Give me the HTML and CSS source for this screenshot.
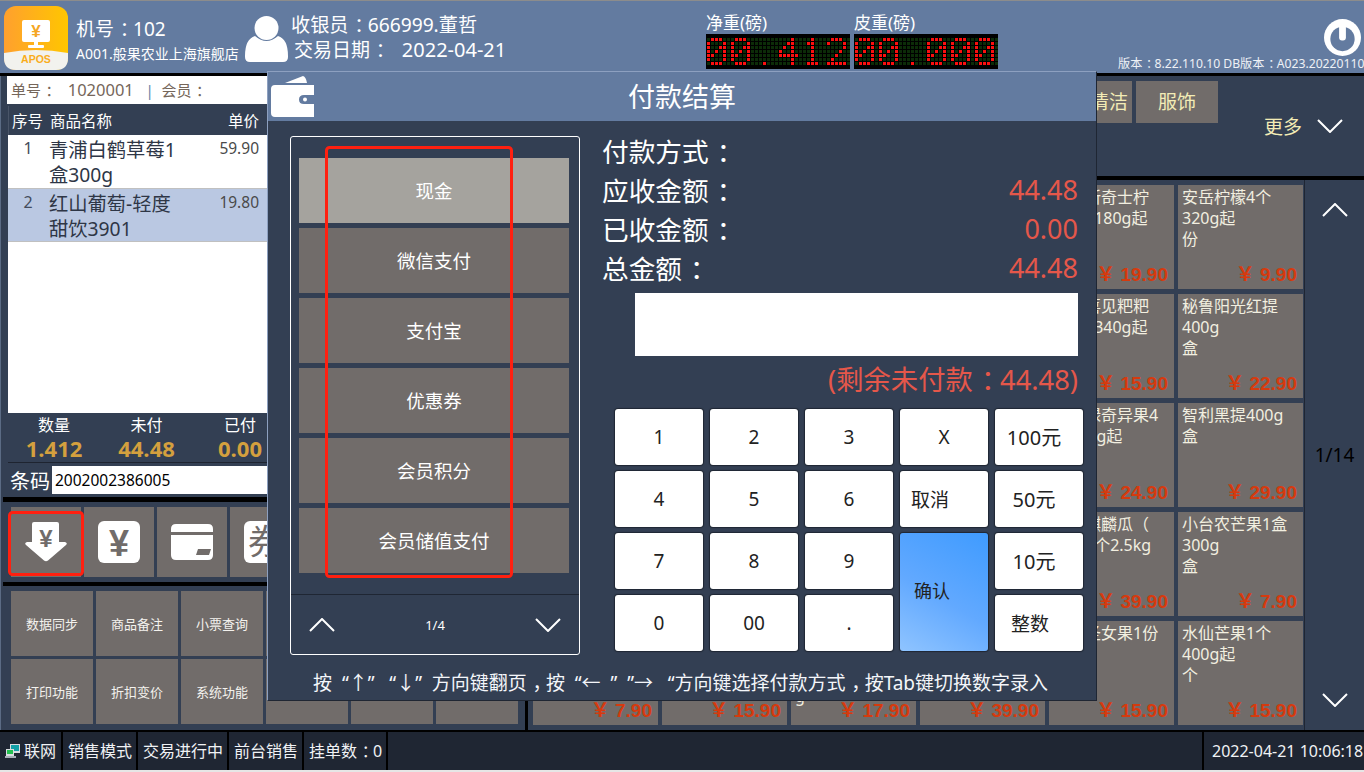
FILE: index.html
```html
<!DOCTYPE html>
<html lang="zh-CN">
<head>
<meta charset="utf-8">
<title>APOS 付款结算</title>
<link rel="stylesheet" href="styles.css">
</head>
<body>
<div class="app">
  <header class="header">
    <svg class="logo" viewBox="0 0 64 64" aria-label="APOS">
      <defs><linearGradient id="lg" x1="0" x2="1" y1="0" y2="0"><stop offset="0" stop-color="#ffa02e"/><stop offset="1" stop-color="#ffc600"/></linearGradient></defs>
      <rect width="64" height="64" rx="12" fill="url(#lg)"/>
      <path d="M0 47Q32 41 64 47V52Q64 64 52 64H12Q0 64 0 52Z" fill="#f2f2ee"/>
      <rect x="18" y="14" width="28" height="22" rx="2" fill="#fff"/>
      <rect x="30" y="36" width="4" height="4" fill="#fff"/>
      <rect x="24" y="39" width="16" height="3" rx="1" fill="#fff"/>
      <text x="32" y="31" text-anchor="middle" class="logo-yen">¥</text>
      <text x="32" y="57" text-anchor="middle" class="logo-name">APOS</text>
    </svg>
    <div class="machine">
      <div class="machine-no">机号<span class="cp">：</span>102</div>
      <div class="store">A001.般果农业上海旗舰店</div>
    </div>
    <svg class="user" viewBox="0 0 43 46"><circle cx="21.5" cy="12" r="12" fill="#fff"/><path d="M0 40Q0 23 10 20Q21.500 30 33 20Q43 23 43 40V41Q43 46 38 46H5Q0 46 0 41Z" fill="#fff"/></svg>
    <div class="cashier">
      <div class="cashier-name">收银员<span class="cp">：</span>666999.董哲</div>
      <div class="trade-date">交易日期<span class="cp">：</span>&nbsp;&nbsp;&nbsp;<span class="date-value">2022-04-21</span></div>
    </div>
    <div class="weight">
      <div class="weight-label">净重(磅)</div>
      <div class="led" data-value="00.412" aria-label="00.412"></div>
    </div>
    <div class="weight">
      <div class="weight-label">皮重(磅)</div>
      <div class="led" data-value="00.000" aria-label="00.000"></div>
    </div>
    <div class="sys">
      <svg class="power" viewBox="0 0 38 38"><circle cx="19" cy="19" r="19" fill="#fff"/><circle cx="19" cy="20.500" r="12.500" fill="#637ba0"/><rect x="15.500" y="3" width="7" height="19" rx="3" fill="#fff"/></svg>
      <div class="version">版本<span class="cp">：</span>8.22.110.10 DB版本<span class="cp">：</span>A023.20220110</div>
    </div>
  </header>

  <main class="main">
    <section class="left">
      <div class="sale">
        <div class="order-bar">单号<span class="cp">：</span>&nbsp;&nbsp;&nbsp;<span class="order-no">1020001</span>&nbsp;&nbsp;&nbsp;<i class="pipe">|</i>&nbsp;&nbsp;会员<span class="cp">：</span></div>
        <div class="thead"><span class="c-no">序号</span><span class="c-name">商品名称</span><span class="c-price">单价</span></div>
        <div class="rows">
          <div class="row"><span class="c-no">1</span><span class="c-name">青浦白鹤草莓1<br>盒300g</span><span class="c-price">59.90</span></div>
          <div class="row row-sel"><span class="c-no">2</span><span class="c-name">红山葡萄-轻度<br>甜饮3901</span><span class="c-price">19.80</span></div>
        </div>
        <div class="totals">
          <div class="total t1"><span>数量</span><b>1.412</b></div>
          <div class="total t2"><span>未付</span><b>44.48</b></div>
          <div class="total t3"><span>已付</span><b>0.00</b></div>
        </div>
        <div class="barcode"><label>条码</label><div class="barcode-input">2002002386005</div></div>
      </div>
      <div class="quick">
        <div class="quick-btn">
          <svg viewBox="0 0 42 40"><path d="M7 2Q7 0 9 0H32Q34 0 34 2V20H40Q43 21 41 23L23 38.500Q21 40 19 38.500L1 23Q-1 21 2 20H7Z" fill="#fff"/><text x="21" y="25" text-anchor="middle" class="ico-yen-s">¥</text></svg>
        </div>
        <div class="quick-btn">
          <svg viewBox="0 0 42 42"><rect width="42" height="42" rx="6" fill="#fff"/><text x="21" y="35" text-anchor="middle" class="ico-yen">¥</text></svg>
        </div>
        <div class="quick-btn">
          <svg class="ico-card" viewBox="0 0 42 36"><path d="M0 8V5Q0 0 5 0H37Q42 0 42 5V8Z" fill="#fff"/><path d="M0 11H42V31Q42 36 37 36H5Q0 36 0 31Z" fill="#fff"/><path d="M27 25H40L38 31H25Z" fill="#716c6a"/></svg>
        </div>
        <div class="quick-btn">
          <svg viewBox="0 0 42 42"><rect width="42" height="42" rx="6" fill="#fff"/><text x="21" y="33" text-anchor="middle" class="ico-quan">券</text></svg>
        </div>
      </div>
      <div class="funcs">
        <div class="func">数据同步</div><div class="func">商品备注</div><div class="func">小票查询</div><div class="func"></div><div class="func"></div><div class="func"></div>
        <div class="func">打印功能</div><div class="func">折扣变价</div><div class="func">系统功能</div><div class="func"></div><div class="func"></div><div class="func"></div>
      </div>
    </section>

    <section class="right">
      <div class="cats">
        <div class="tabs"><div class="tab tab-clean">清洁</div><div class="tab">服饰</div></div>
        <div class="more">更多<svg class="chev" viewBox="0 0 26 14"><polyline points="1,1 13,13 25,1"/></svg></div>
      </div>
      <div class="goods">
        <div class="grid">
          <div class="card"></div><div class="card"></div><div class="card"></div><div class="card"></div>
          <div class="card"><div class="name">美国新奇士柠<br>檬4个180g起</div><div class="price">￥ 19.90</div></div>
          <div class="card"><div class="name">安岳柠檬4个<br>320g起<br>份</div><div class="price">￥ 9.90</div></div>
          <div class="card"></div><div class="card"></div><div class="card"></div><div class="card"></div>
          <div class="card"><div class="name">云南喜见粑粑<br>粑1盒340g起</div><div class="price">￥ 15.90</div></div>
          <div class="card"><div class="name">秘鲁阳光红提<br>400g<br>盒</div><div class="price">￥ 22.90</div></div>
          <div class="card"></div><div class="card"></div><div class="card"></div><div class="card"></div>
          <div class="card"><div class="name">佳沛绿奇异果4<br>个100g起</div><div class="price">￥ 24.90</div></div>
          <div class="card"><div class="name">智利黑提400g<br>盒</div><div class="price">￥ 29.90</div></div>
          <div class="card"></div><div class="card"></div><div class="card"></div><div class="card"></div>
          <div class="card"><div class="name">黑美麒麟瓜（<br>约重1个2.5kg</div><div class="price">￥ 39.90</div></div>
          <div class="card"><div class="name">小台农芒果1盒<br>300g<br>盒</div><div class="price">￥ 7.90</div></div>
          <div class="card"><div class="name"></div><div class="price">￥ 7.90</div></div>
          <div class="card"><div class="name"></div><div class="price">￥ 15.90</div></div>
          <div class="card"><div class="name"><br><br><br>g</div><div class="price">￥ 17.90</div></div>
          <div class="card"><div class="name"></div><div class="price">￥ 39.90</div></div>
          <div class="card"><div class="name">有机圣女果1份</div><div class="price">￥ 15.90</div></div>
          <div class="card"><div class="name">水仙芒果1个<br>400g起<br>个</div><div class="price">￥ 15.90</div></div>
        </div>
        <div class="pager-col">
          <svg class="chev" viewBox="0 0 26 14"><polyline points="1,13 13,1 25,13"/></svg>
          <span class="page-no">1/14</span>
          <svg class="chev" viewBox="0 0 26 14"><polyline points="1,1 13,13 25,1"/></svg>
        </div>
      </div>
    </section>
  </main>

  <footer class="footer">
    <div class="cell cell-net">
      <svg class="net" viewBox="0 0 16 16"><rect x="5" y="1" width="10" height="9" fill="#d8dce0"/><rect x="6" y="2" width="8" height="6" fill="#12a0a8"/><rect x="1" y="6" width="8" height="7" fill="#d8dce0"/><rect x="2" y="7" width="6" height="4" fill="#22c050"/><rect x="0" y="13" width="11" height="2" fill="#a8b0b8"/></svg>联网
    </div>
    <div class="cell">销售模式</div>
    <div class="cell">交易进行中</div>
    <div class="cell">前台销售</div>
    <div class="cell">挂单数<span class="cp">：</span>0</div>
    <div class="cell cell-date">2022-04-21 10:06:18</div>
  </footer>
  <div class="edge"></div>

  <svg class="mark mark-btn"><rect x="1.500" y="1.500" width="73" height="62" rx="3"/></svg>

  <div class="modal">
    <div class="modal-title">
      <svg class="wallet" viewBox="0 0 44 42"><path d="M15 8L33 1Q36 2 37 8Z" fill="#fff"/><path d="M5 10H44V20H34Q29 20 29 24.500Q29 29 34 29H44V42H5Q1 42 1 38V14Q1 10 5 10Z" fill="#fff"/><circle cx="35" cy="24.500" r="2" fill="#fff"/></svg>
      付款结算
    </div>
    <div class="modal-body">
      <div class="methods">
        <div class="method-list">
          <div class="method method-on">现金</div>
          <div class="method">微信支付</div>
          <div class="method">支付宝</div>
          <div class="method">优惠券</div>
          <div class="method">会员积分</div>
          <div class="method">会员储值支付</div>
        </div>
        <div class="method-pager">
          <svg class="chev" viewBox="0 0 26 14"><polyline points="1,13 13,1 25,13"/></svg>
          <span class="method-page">1/4</span>
          <svg class="chev" viewBox="0 0 26 14"><polyline points="1,1 13,13 25,1"/></svg>
        </div>
      </div>
      <div class="settle">
        <div class="line"><span>付款方式<span class="cp">：</span></span></div>
        <div class="line"><span>应收金额<span class="cp">：</span></span><b>44.48</b></div>
        <div class="line"><span>已收金额<span class="cp">：</span></span><b>0.00</b></div>
        <div class="line"><span>总金额<span class="cp">：</span></span><b>44.48</b></div>
        <div class="amount-input"></div>
        <div class="remain">(剩余未付款<span class="cp">：</span>44.48)</div>
        <div class="keypad">
          <div class="key">1</div><div class="key">2</div><div class="key">3</div><div class="key">X</div><div class="key key-money">100元</div>
          <div class="key">4</div><div class="key">5</div><div class="key">6</div><div class="key key-l1">取消</div><div class="key key-money">50元</div>
          <div class="key">7</div><div class="key">8</div><div class="key">9</div><div class="key key-ok">确认</div><div class="key key-money">10元</div>
          <div class="key">0</div><div class="key">00</div><div class="key">.</div><div class="key key-l2">整数</div>
        </div>
      </div>
    </div>
    <div class="hint">按&nbsp;&nbsp;“↑”&nbsp;&nbsp;&nbsp;“↓”&nbsp;&nbsp;方向键翻页<span class="cp">，</span>按&nbsp;&nbsp;“←&nbsp;&nbsp;”&nbsp;&nbsp;”→&nbsp;&nbsp;&nbsp;“方向键选择付款方式<span class="cp">，</span>按Tab键切换数字录入</div>
  </div>
  <svg class="mark mark-list"><rect x="1.500" y="1.500" width="185" height="429" rx="3"/></svg>
</div>
<script src="led.js"></script>
</body>
</html>
```

FILE: styles.css
```css
* { box-sizing: border-box; }
html, body { margin: 0; padding: 0; }
body {
  width: 1364px; height: 772px; overflow: hidden;
  font-family: "Noto Sans", "Noto Sans CJK SC", sans-serif;
  background: #fff;
}
.app { position: relative; width: 1364px; height: 772px; overflow: hidden; display: flex; flex-direction: column; background: #333f53; }
.cp { padding-left: .3em; letter-spacing: -.3em; white-space: nowrap; }

/* header */
.header { flex: none; height: 76px; display: flex; align-items: flex-start; background: #637ba0; border-top: 1px solid #8c8c8c; border-bottom: 3px solid #000; color: #fff; }
.logo { flex: none; width: 64px; height: 64px; margin: 5px 0 0 4px; }
.logo-yen { font: 700 17px "Liberation Sans", sans-serif; fill: #f5a623; }
.logo-name { font: 700 10.500px "Liberation Sans", sans-serif; fill: #f9ad1c; }
.machine { flex: none; width: 169px; margin: 15px 0 0 8px; }
.machine-no { font-size: 19px; line-height: 26px; }
.store { font-size: 14px; line-height: 24px; white-space: nowrap; }
.user { flex: none; width: 43px; height: 46px; margin-top: 15px; }
.cashier { flex: none; width: 415px; margin: 11px 0 0 3px; }
.cashier-name { font-size: 19.200px; line-height: 26px; }
.trade-date { font-size: 19px; line-height: 23px; padding-left: 3px; }
.date-value { font-size: 20px; margin-left: -2px; }
.weight { flex: none; width: 148px; margin-top: 11px; }
.weight-label { font-size: 17px; line-height: 22px; }
.led { width: 144px; height: 35px; padding: 4px 0 0 1px; background: #000; display: grid; grid-template-columns: repeat(36, 3px); grid-auto-rows: 3px; gap: 1px; overflow: hidden; }
.led i { display: block; background: #0c2c08; }
.led i.on { background: #fb0f0f; }
.sys { flex: none; width: 246px; margin: 0 0 0 auto; display: flex; flex-direction: column; }
.power { align-self: flex-end; width: 37px; height: 37px; margin: 18px 3px 0 0; }
.version { font-size: 12.200px; line-height: 16px; white-space: nowrap; overflow: hidden; color: #eef1f6; }

/* main */
.main { flex: none; height: 654px; display: flex; }
.left { flex: none; width: 525px; display: flex; flex-direction: column; padding-left: 2px; border-left: 1px solid #5b6b84; }
.sale { flex: none; height: 421px; padding-left: 4px; }
.order-bar { height: 28px; background: #fff; font-size: 15px; line-height: 27px; padding-left: 4px; color: #75665a; white-space: nowrap; }
.order-no { font-size: 16.500px; }
.pipe { font-style: normal; color: #5f82a8; }
.thead { display: flex; height: 29px; margin: 2px 0 0 1px; font-size: 15.500px; line-height: 30px; color: #fff; background: #333f53; border-left: 1px solid #4a5568; }
.c-no { flex: none; width: 37px; text-align: center; }
.c-name { flex: none; width: 171px; padding-left: 4px; }
.c-price { flex: none; width: 42px; text-align: right; }
.rows { height: 278px; margin-left: 1px; background: #fff; }
.row { display: flex; height: 53.500px; padding-top: 2px; border-bottom: 1px solid #c0c0c0; color: #2e3646; }
.row .c-no { font-size: 16px; line-height: 22px; color: #444c5c; width: 40px; }
.row .c-name { font-size: 19.300px; line-height: 25px; width: 169px; padding-left: 1px; white-space: nowrap; }
.row .c-price { font-size: 15.500px; line-height: 22px; color: #4a4a4a; }
.row-sel { background: #bac8e2; }
.totals { display: flex; height: 50px; margin-left: 1px; border-bottom: 1px solid #1e2430; color: #fff; }
.total { display: flex; flex-direction: column; align-items: center; }
.total span { font-size: 16px; line-height: 24px; }
.total b { font-family: "Open Sans", sans-serif; font-size: 22px; line-height: 23px; color: #d4a03e; }
.t1 { width: 92px; }
.t2 { width: 93px; }
.t3 { width: 94px; }
.barcode { display: flex; align-items: center; height: 28px; margin-top: 3px; }
.barcode label { flex: none; width: 45px; padding-left: 3px; font-size: 20px; color: #fff; white-space: nowrap; }
.barcode-input { flex: 1; height: 28px; background: #fff; color: #000; font-size: 15.500px; line-height: 28px; padding-left: 3px; }
.quick { flex: none; height: 85px; border-top: 5px solid #000; display: flex; gap: 3px; padding: 5px 0 0 8px; overflow: hidden; }
.quick-btn { flex: none; width: 70px; height: 70px; background: #716c6a; display: flex; align-items: center; justify-content: center; }
.quick-btn svg { width: 42px; height: 42px; }
.quick-btn svg.ico-card { height: 36px; }
.ico-yen-s { font: 700 24px "Liberation Sans", sans-serif; fill: #716c6a; }
.ico-yen { font: 700 36px "Liberation Sans", sans-serif; fill: #716c6a; }
.ico-quan { font: 400 34px "Noto Sans CJK SC", sans-serif; fill: #716c6a; }
.funcs { flex: none; height: 148px; border-top: 4px solid #000; display: grid; grid-template-columns: repeat(6, 82px); grid-auto-rows: 65px; gap: 3px; padding: 5px 0 0 8px; }
.func { background: #716c6a; color: #f4f2ee; font-size: 13px; display: flex; align-items: center; justify-content: center; }

.right { flex: none; width: 839px; display: flex; flex-direction: column; border-left: 3px solid #000; }
.cats { flex: none; height: 104px; border-bottom: 4px solid #000; display: flex; }
.tabs { flex: none; width: 690px; display: flex; justify-content: flex-end; gap: 4px; padding-top: 5px; }
.tab { flex: none; width: 82px; height: 42px; background: #716c6a; color: #f3ecb6; font-size: 19px; line-height: 42px; text-align: center; }
.tab-clean { width: 46px; }
.more { flex: none; display: flex; align-items: center; height: 28px; margin: 36px 0 0 46px; font-size: 19px; color: #f3ecb6; }
.chev { flex: none; width: 26px; height: 14px; }
.chev polyline { fill: none; stroke: #fff; stroke-width: 2; }
.more .chev { margin-left: 15px; }
.goods { flex: 1; display: flex; min-height: 0; }
.grid { flex: none; width: 776px; display: grid; grid-template-columns: repeat(6, 125px); grid-auto-rows: 104px; gap: 5px 4px; padding: 5px 0 0 5px; }
.card { background: #716c6a; display: flex; flex-direction: column; padding: 2px 6px 1px 4px; color: #f2efe0; overflow: hidden; }
.name { flex: 1; min-height: 0; font-size: 16px; line-height: 21px; white-space: nowrap; }
.price { flex: none; text-align: right; color: #d63a0e; font: 700 19px/26px "Liberation Sans", "Noto Sans CJK SC", sans-serif; white-space: nowrap; }
.pager-col { flex: none; width: 60px; border-left: 1px solid #1f2633; display: flex; flex-direction: column; align-items: center; justify-content: space-between; padding: 23px 0; }
.page-no { font-size: 19px; color: #000; }

/* footer */
.footer { flex: none; height: 40px; border-top: 2px solid #000; background: #1f2633; display: flex; color: #f0f2f5; font-size: 16px; line-height: 38px; white-space: nowrap; }
.cell { flex: none; padding: 0 4px 0 5px; border-right: 2px solid #000; }
.cell-net { display: flex; align-items: center; width: 63px; gap: 3px; }
.net { width: 16px; height: 16px; flex: none; }
.cell-date { margin-left: auto; border-right: 0; border-left: 2px solid #000; width: 162px; padding: 0 0 0 8px; overflow: hidden; }
.edge { flex: none; height: 2px; background: #e6e6e6; }

/* payment dialog */
.modal { position: absolute; left: 267px; top: 71px; width: 830px; height: 630px; background: #333f53; border: 1px solid #1f2633; border-top-color: #8da0c0; border-left-color: #8da0c0; display: flex; flex-direction: column; color: #fff; }
.modal-title { position: relative; flex: none; height: 49px; background: #637ba0; text-align: center; font-size: 27px; line-height: 50px; }
.wallet { position: absolute; left: 2px; top: 3px; width: 44px; height: 42px; }
.modal-body { flex: none; height: 542px; display: flex; padding: 10px 0 0 22px; }
.methods { flex: none; width: 290px; height: 519px; margin-top: 5px; border: 1px solid #fff; border-radius: 3px; display: flex; flex-direction: column; }
.method-list { flex: none; height: 458px; padding: 21px 10px 21px 8px; border-bottom: 1px solid #1f2633; display: flex; flex-direction: column; gap: 5px; }
.method { flex: none; height: 65px; padding-bottom: 2px; background: #716c6a; font-size: 18.500px; display: flex; align-items: center; justify-content: center; }
.method-on { background: #a5a39e; }
.method-pager { flex: 1; display: flex; align-items: center; justify-content: space-between; padding: 0 18px; }
.method-page { font-size: 13px; }
.settle { flex: none; width: 481px; margin-left: 22px; }
.line { height: 39px; width: 476px; display: flex; justify-content: space-between; align-items: center; font-size: 26.700px; white-space: nowrap; }
.line b { font-weight: 400; font-size: 27px; color: #e5574a; }
.amount-input { width: 443px; height: 63px; margin: 6px 0 0 33px; background: #fff; }
.remain { width: 476px; height: 53px; text-align: right; font-size: 27.300px; line-height: 47px; color: #e5574a; white-space: nowrap; }
.keypad { display: grid; grid-template-columns: repeat(5, 88px); grid-auto-rows: 56px; gap: 6px 7px; margin-left: 13px; }
.key { background: #fff; border-radius: 3px; box-shadow: 0 0 1px 1px #1f2633; color: #222; font-size: 19px; padding-bottom: 1px; display: flex; align-items: center; justify-content: center; white-space: nowrap; }
.key-money { padding-right: 10px; font-size: 20px; }
.key-l1 { justify-content: flex-start; padding-left: 11px; }
.key-l2 { justify-content: flex-start; padding-left: 16px; grid-column: 5; grid-row: 4; }
.key-ok { grid-column: 4; grid-row: 3 / span 2; justify-content: flex-start; padding: 0 0 4px 14px; font-size: 18px; background: linear-gradient(30deg, #8fc4ff 0%, #62a9ff 45%, #3f9bff 100%); }
.hint { flex: 1; padding-left: 45px; font-size: 19px; line-height: 40px; white-space: nowrap; color: #f4f6fa; }

/* red annotation frames */
.mark { position: absolute; fill: none; stroke: #ff2010; stroke-width: 3; }
.mark-btn { left: 8px; top: 511px; width: 76px; height: 65px; }
.mark-list { left: 325px; top: 146px; width: 188px; height: 433px; }
```

FILE: led.js
```js
var FONT = {
  "0": ["01110", "10001", "10011", "10101", "11001", "10001", "01110"],
  "1": ["00100", "01100", "00100", "00100", "00100", "00100", "01110"],
  "2": ["01110", "10001", "00001", "00010", "00100", "01000", "11111"],
  "4": ["00010", "00110", "01010", "10010", "11111", "00010", "00010"],
  ".": ["00000", "00000", "00000", "00000", "00000", "00000", "00100"]
};
document.querySelectorAll(".led").forEach(function (led) {
  var chars = led.dataset.value.split("");
  for (var row = 0; row < 7; row++) {
    chars.forEach(function (ch) {
      var bits = FONT[ch][row] + "0";
      for (var col = 0; col < 6; col++) {
        var dot = document.createElement("i");
        if (bits[col] === "1") dot.className = "on";
        led.appendChild(dot);
      }
    });
  }
});
```
